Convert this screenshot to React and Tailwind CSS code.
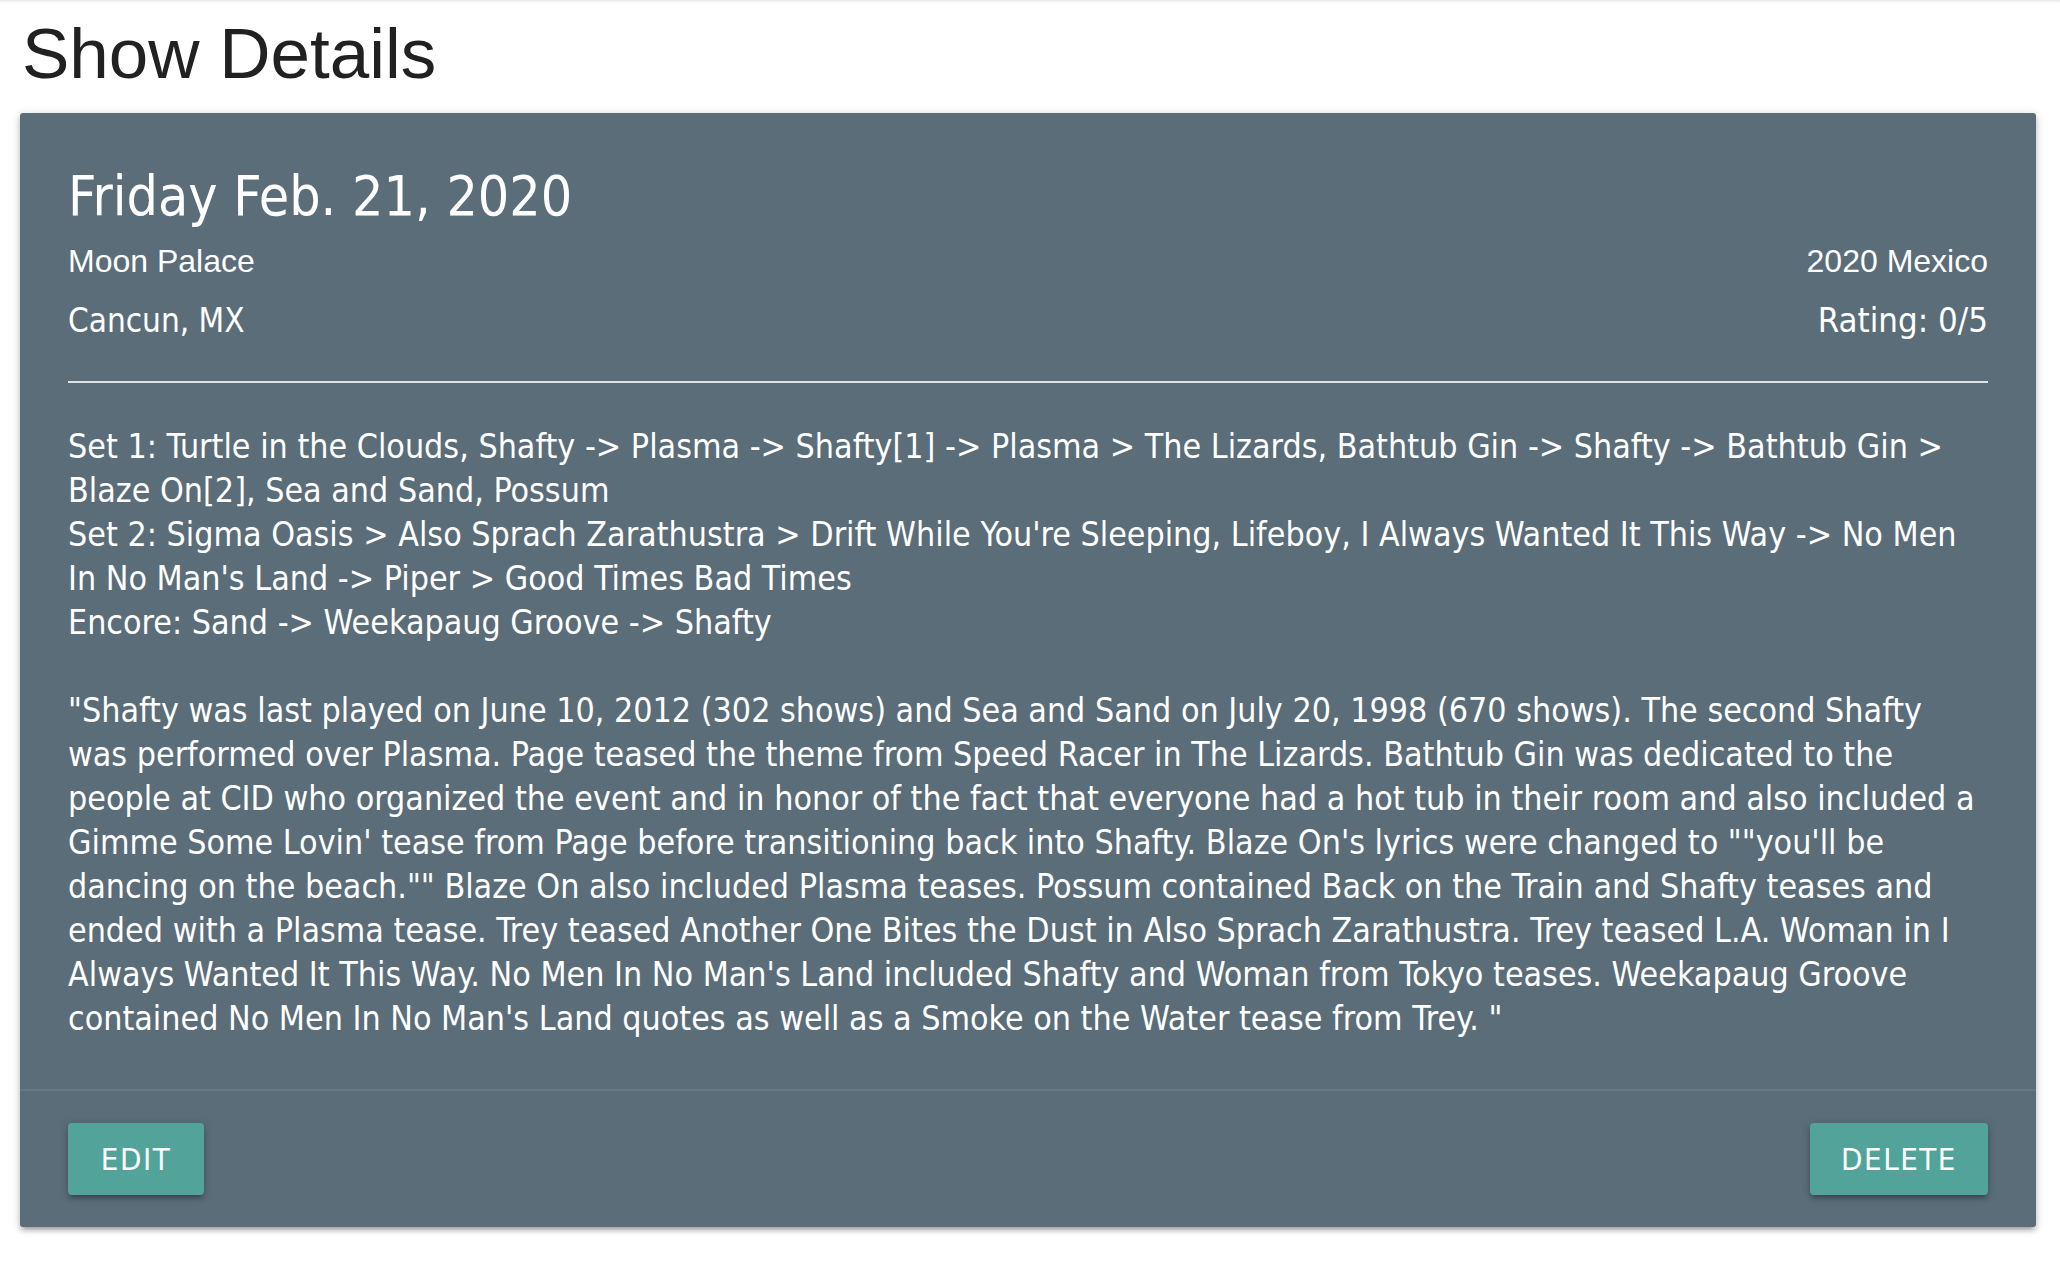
import React from 'react';

const show = {
  date: 'Friday Feb. 21, 2020',
  venue: 'Moon Palace',
  location: 'Cancun, MX',
  tour: '2020 Mexico',
  rating: 0,
  sets: [
    'Set 1: Turtle in the Clouds, Shafty -> Plasma -> Shafty[1] -> Plasma > The Lizards, Bathtub Gin -> Shafty -> Bathtub Gin > Blaze On[2], Sea and Sand, Possum',
    "Set 2: Sigma Oasis > Also Sprach Zarathustra > Drift While You're Sleeping, Lifeboy, I Always Wanted It This Way -> No Men In No Man's Land -> Piper > Good Times Bad Times",
    'Encore: Sand -> Weekapaug Groove -> Shafty',
  ],
  notes:
    '"Shafty was last played on June 10, 2012 (302 shows) and Sea and Sand on July 20, 1998 (670 shows). The second Shafty was performed over Plasma. Page teased the theme from Speed Racer in The Lizards. Bathtub Gin was dedicated to the people at CID who organized the event and in honor of the fact that everyone had a hot tub in their room and also included a Gimme Some Lovin\' tease from Page before transitioning back into Shafty. Blaze On\'s lyrics were changed to ""you\'ll be dancing on the beach."" Blaze On also included Plasma teases. Possum contained Back on the Train and Shafty teases and ended with a Plasma tease. Trey teased Another One Bites the Dust in Also Sprach Zarathustra. Trey teased L.A. Woman in I Always Wanted It This Way. No Men In No Man\'s Land included Shafty and Woman from Tokyo teases. Weekapaug Groove contained No Men In No Man\'s Land quotes as well as a Smoke on the Water tease from Trey. "',
};

const cardShadow =
  'shadow-[0_4px_4px_0_rgba(0,0,0,0.14),0_6px_2px_-4px_rgba(0,0,0,0.12),0_2px_10px_0_rgba(0,0,0,0.2)]';

const App = () => {
  return (
    <div className="min-h-screen bg-white">
      <div className="h-[3px] bg-gradient-to-b from-[#e8e8e8] to-white" />
      <div className="pl-[20px] pr-[24px] pb-[38px]">
        <h1 className="pt-[15px] pl-[2px] text-[71px] leading-[71px] text-[#212121] font-['Liberation_Sans',Arial,sans-serif]">
          Show Details
        </h1>

        <div className={`mt-[24px] rounded-[3px] bg-[#5a6d79] text-white ${cardShadow}`}>
          <div className="p-[48px] font-['DejaVu_Sans_Condensed','DejaVu_Sans',sans-serif] [font-stretch:condensed]">
            <div className="text-[55px] leading-[70px]">{show.date}</div>

            <div className="flex justify-between items-center h-[60px] text-[32px] font-['Liberation_Sans',Arial,sans-serif]">
              <span>{show.venue}</span>
              <span>{show.tour}</span>
            </div>
            <div className="flex justify-between items-center h-[60px]">
              <span className="text-[33px]">{show.location}</span>
              <span className="text-[34.5px]">Rating: {show.rating}/5</span>
            </div>

            <hr className="mt-[30px] mb-[42px] border-0 h-[2px] bg-[#dfe3e6]" />

            <div className="text-[33.7px] leading-[44px]">
              {show.sets.map((set) => (
                <div key={set}>{set}</div>
              ))}
              <div className="h-[44px]" />
              <p>{show.notes}</p>
            </div>
          </div>

          <div className="flex justify-between border-t-[2px] border-[#65788a] px-[48px] py-[32px]">
            <button className={`h-[72px] w-[136px] rounded-[4px] bg-[#52a49a] text-[31px] tracking-[1.5px] text-white uppercase font-['DejaVu_Sans_Condensed','DejaVu_Sans',sans-serif] [font-stretch:condensed] ${cardShadow}`}>
              Edit
            </button>
            <button className={`h-[72px] w-[178px] rounded-[4px] bg-[#52a49a] text-[31px] tracking-[1.5px] text-white uppercase font-['DejaVu_Sans_Condensed','DejaVu_Sans',sans-serif] [font-stretch:condensed] ${cardShadow}`}>
              Delete
            </button>
          </div>
        </div>
      </div>
    </div>
  );
};

export default App;
